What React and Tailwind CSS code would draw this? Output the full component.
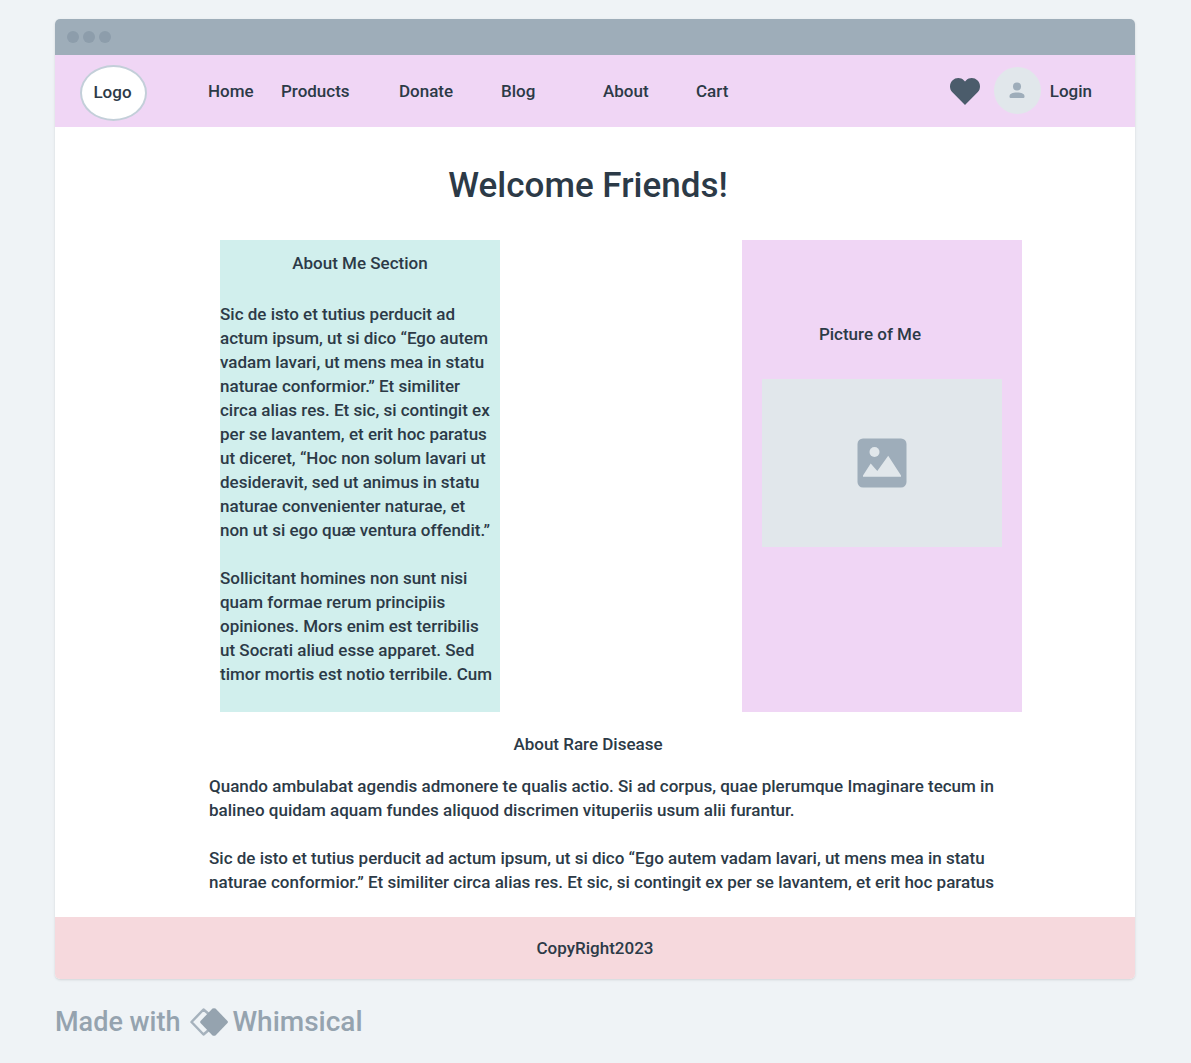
const navItems = [
  { label: "Home", width: "w-[73px]" },
  { label: "Products", width: "w-[118px]" },
  { label: "Donate", width: "w-[102px]" },
  { label: "Blog", width: "w-[102px]" },
  { label: "About", width: "w-[93px]" },
  { label: "Cart", width: "w-[40px]" },
];

const aboutMe = [
  [
    "Sic de isto et tutius perducit ad",
    "actum ipsum, ut si dico “Ego autem",
    "vadam lavari, ut mens mea in statu",
    "naturae conformior.” Et similiter",
    "circa alias res. Et sic, si contingit ex",
    "per se lavantem, et erit hoc paratus",
    "ut diceret, “Hoc non solum lavari ut",
    "desideravit, sed ut animus in statu",
    "naturae convenienter naturae, et",
    "non ut si ego quæ ventura offendit.”",
  ],
  [
    "Sollicitant homines non sunt nisi",
    "quam formae rerum principiis",
    "opiniones. Mors enim est terribilis",
    "ut Socrati aliud esse apparet. Sed",
    "timor mortis est notio terribile. Cum",
  ],
];

const rareDisease = [
  [
    "Quando ambulabat agendis admonere te qualis actio. Si ad corpus, quae plerumque Imaginare tecum in",
    "balineo quidam aquam fundes aliquod discrimen vituperiis usum alii furantur.",
  ],
  [
    "Sic de isto et tutius perducit ad actum ipsum, ut si dico “Ego autem vadam lavari, ut mens mea in statu",
    "naturae conformior.” Et similiter circa alias res. Et sic, si contingit ex per se lavantem, et erit hoc paratus",
  ],
];

function Paragraphs({ items }) {
  return (
    <div className="flex flex-col gap-6 whitespace-nowrap">
      {items.map((lines) => (
        <p key={lines[0]}>
          {lines.map((line) => (
            <span key={line} className="block">
              {line}{" "}
            </span>
          ))}
        </p>
      ))}
    </div>
  );
}

function NavBar() {
  return (
    <header className="flex h-[72px] items-center bg-[#f0d6f5] pr-[43px] pl-[25px]">
      <a
        href="#logo"
        className="mt-1 flex h-14 w-[67px] shrink-0 items-center justify-center rounded-[50%] border-2 border-[#c3cfd9] bg-white pr-0.5 pb-0.5"
      >
        Logo
      </a>
      <nav className="ml-[61px] flex">
        {navItems.map((item) => (
          <div key={item.label} className={item.width}>
            <a href={"#" + item.label.toLowerCase()}>{item.label}</a>
          </div>
        ))}
      </nav>
      <div className="ml-auto flex items-center">
        <button type="button" aria-label="Favorites" className="mr-3.5">
          <svg width="30" height="27" viewBox="0 0 30 27" fill="#4b5c6b">
            <path d="M15 27 2.4 14.3C-.8 11-.8 5.800 2.400 2.500 5.700-.8 10.800-.8 14 2.400L15 3.400 16 2.400C19.200-.8 24.300-.8 27.600 2.500 30.800 5.800 30.800 11 27.600 14.300Z" />
          </svg>
        </button>
        <span className="mb-0.5 flex size-[47px] items-center justify-center rounded-full bg-[#e1e7eb]">
          <svg width="16" height="16" viewBox="0 0 16 16" fill="#9eadba">
            <circle cx="8" cy="4.500" r="4" />
            <path d="M.5 14.500C.5 11.500 3.500 10.500 8 10.500S15.500 11.500 15.500 14.500Q15.500 16 14.500 16H1.500Q.5 16 .5 14.500Z" />
          </svg>
        </span>
        <a href="#login" className="ml-[9px]">
          Login
        </a>
      </div>
    </header>
  );
}

export default function App() {
  return (
    <div className="min-h-screen bg-[#eff3f6] pt-[19px] pr-14 pb-5 pl-[55px] font-['Roboto',sans-serif] text-[17px] leading-6 font-medium text-[#2c3a47]">
      <div className="overflow-hidden rounded-[5px] bg-white shadow">
        <div className="flex h-9 items-center gap-1 bg-[#9eadb9] pl-3">
          <span className="size-3 rounded-full bg-[#8d9dab]" />
          <span className="size-3 rounded-full bg-[#8d9dab]" />
          <span className="size-3 rounded-full bg-[#8d9dab]" />
        </div>
        <NavBar />
        <main className="pt-[35px] pb-[23px]">
          <h1 className="pr-3.5 text-center text-[35px] leading-12 font-medium">
            Welcome Friends!
          </h1>
          <div className="mt-[30px] flex justify-between pr-[113px] pl-[165px]">
            <section className="h-[472px] w-[280px] bg-[#d1efed] pt-[11px]">
              <h2 className="mb-[27px] text-center">About Me Section</h2>
              <Paragraphs items={aboutMe} />
            </section>
            <section className="h-[472px] w-[280px] bg-[#f0d6f5] px-5 pt-[82px]">
              <h2 className="pr-6 text-center">Picture of Me</h2>
              <div className="mt-[33px] flex h-[168px] items-center justify-center bg-[#e1e7eb]">
                <svg width="50" height="50" viewBox="0 0 50 50" role="img" aria-label="Picture of Me">
                  <rect x=".5" y=".5" width="49" height="49" rx="5.500" fill="#9eadba" />
                  <circle cx="17.500" cy="14" r="5" fill="#e1e7eb" />
                  <path d="M6 38.700V37.500L13.700 25.500 20.300 33 31.200 17.700 44 37.500V38.700Z" fill="#e1e7eb" />
                </svg>
              </div>
            </section>
          </div>
          <section>
            <h2 className="mt-5 mb-[18px] pr-3.5 text-center">About Rare Disease</h2>
            <div className="pl-[154px]">
              <Paragraphs items={rareDisease} />
            </div>
          </section>
        </main>
        <footer className="flex h-[62px] items-center justify-center bg-[#f6d9dd]">CopyRight2023</footer>
      </div>
      <div className="mt-[27px] flex h-8 items-center leading-8 text-[#95a3af]">
        <span className="text-[27px]">Made with</span>
        <svg className="mr-1 ml-2.5" width="38" height="28" viewBox="0 0 38 28" aria-hidden="true">
          <path d="M20.500 7.500 13.500 1.500 1.500 14 13.500 26.500 20.500 20.500" fill="none" stroke="#a6b2bd" strokeWidth="2.500" strokeLinejoin="round" />
          <path d="M22.500.5Q24 0 25.500.5L37.500 13Q38.300 14 37.500 15L25.500 27.500Q24 28 22.500 27.500L10.500 15Q9.800 14 10.500 13Z" fill="#95a3af" />
        </svg>
        <span className="text-[28px]">Whimsical</span>
      </div>
    </div>
  );
}
